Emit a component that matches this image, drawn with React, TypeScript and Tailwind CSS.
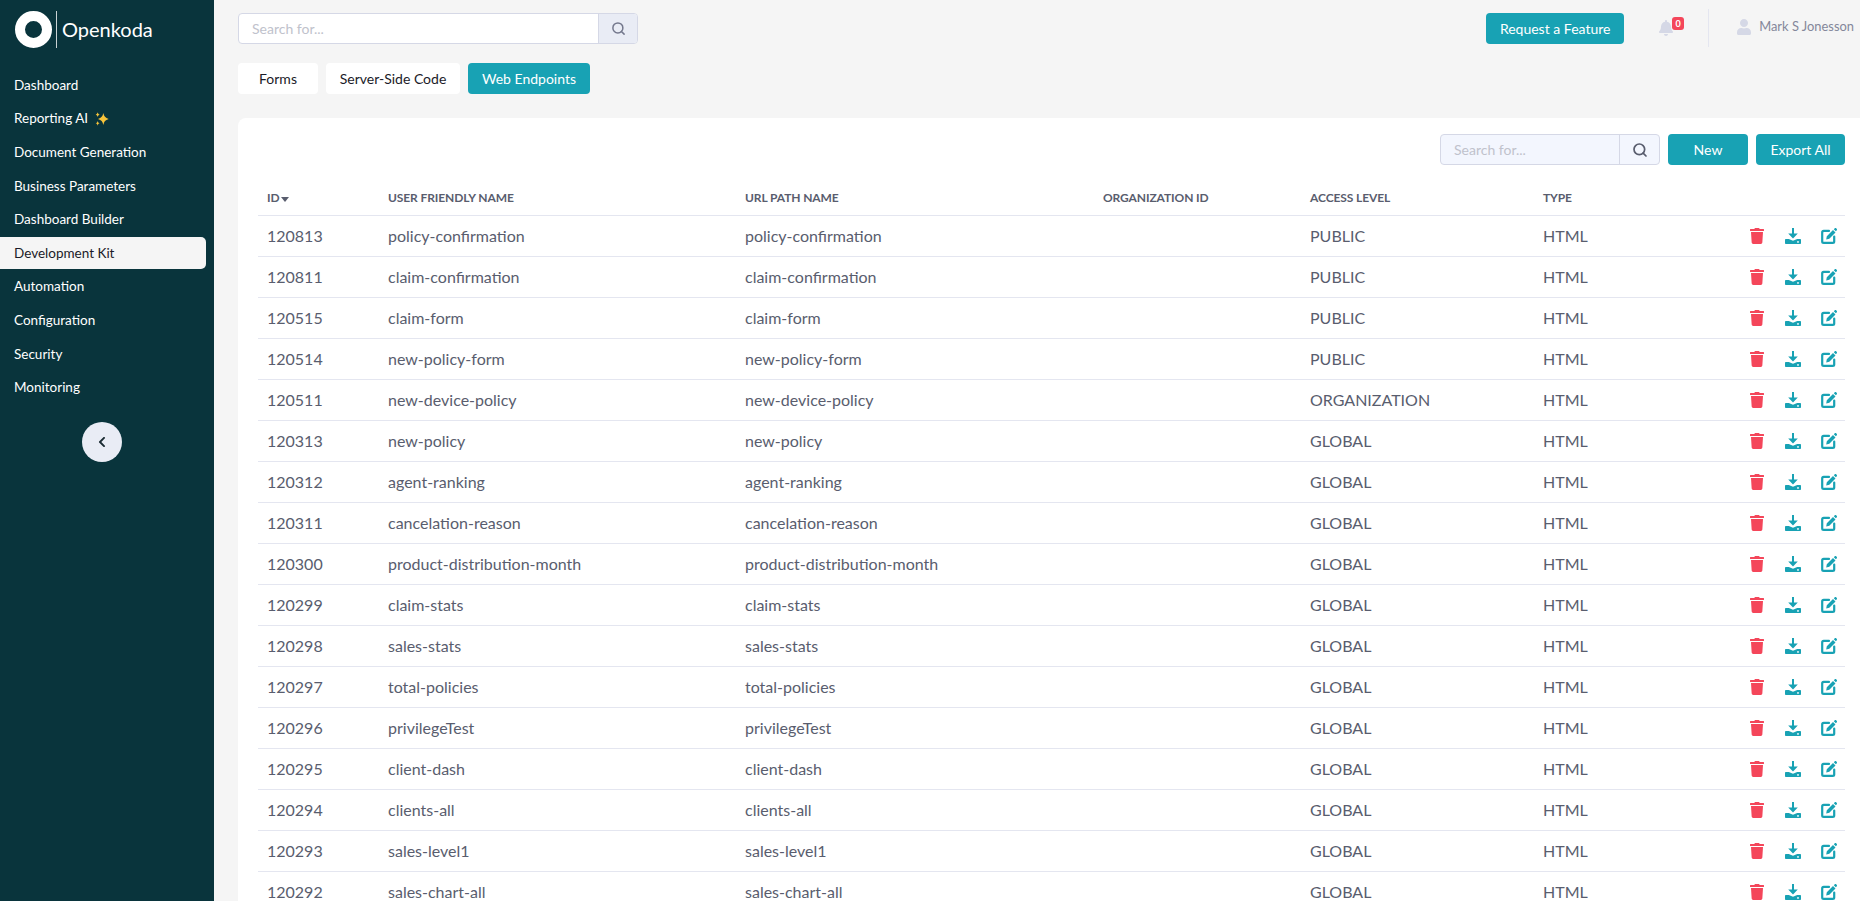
import React from "react";
import { FaTrash, FaBell, FaUser, FaChevronLeft } from "react-icons/fa";
import { Search } from "lucide-react";

const nav = ["Dashboard", "Reporting AI", "Document Generation", "Business Parameters", "Dashboard Builder", "Development Kit", "Automation", "Configuration", "Security", "Monitoring"];

const rows: [string, string, string, string][] = [
  ["120813", "policy-confirmation", "policy-confirmation", "PUBLIC"],
  ["120811", "claim-confirmation", "claim-confirmation", "PUBLIC"],
  ["120515", "claim-form", "claim-form", "PUBLIC"],
  ["120514", "new-policy-form", "new-policy-form", "PUBLIC"],
  ["120511", "new-device-policy", "new-device-policy", "ORGANIZATION"],
  ["120313", "new-policy", "new-policy", "GLOBAL"],
  ["120312", "agent-ranking", "agent-ranking", "GLOBAL"],
  ["120311", "cancelation-reason", "cancelation-reason", "GLOBAL"],
  ["120300", "product-distribution-month", "product-distribution-month", "GLOBAL"],
  ["120299", "claim-stats", "claim-stats", "GLOBAL"],
  ["120298", "sales-stats", "sales-stats", "GLOBAL"],
  ["120297", "total-policies", "total-policies", "GLOBAL"],
  ["120296", "privilegeTest", "privilegeTest", "GLOBAL"],
  ["120295", "client-dash", "client-dash", "GLOBAL"],
  ["120294", "clients-all", "clients-all", "GLOBAL"],
  ["120293", "sales-level1", "sales-level1", "GLOBAL"],
  ["120292", "sales-chart-all", "sales-chart-all", "GLOBAL"],
];

function Sparkles() {
  return (
    <svg viewBox="0 0 24 24" className="w-[16px] h-[16px] ml-[6px]" aria-label="sparkles">
      <path fill="#f7c43b" d="M14 3c1 5 3 7.500 8 9-5 1.500-7 4-8 9-1-5-3-7.500-8-9 5-1.500 7-4 8-9z" />
      <path fill="#f7c43b" d="M5.500 2c.4 2 1.200 2.900 3 3.500-1.800.6-2.600 1.500-3 3.500-.4-2-1.200-2.900-3-3.500 1.800-.6 2.600-1.500 3-3.500zM5.500 15c.4 2 1.200 2.900 3 3.500-1.800.6-2.600 1.500-3 3.500-.4-2-1.200-2.900-3-3.500 1.800-.6 2.600-1.500 3-3.500z" />
    </svg>
  );
}

function DownloadIcon() {
  return (
    <svg viewBox="0 0 16 16" className="w-[16px] h-[16px] text-[#18a2b4]" aria-hidden="true">
      <path fill="currentColor" d="M7 0h2v5.500h3.800L8 10.500 3.200 5.500H7z" />
      <path fill="currentColor" fillRule="evenodd" d="M0 12c0-.6.500-1 1-1h2.800L8 12.800 12.200 11H15c.6 0 1 .4 1 1v3c0 .6-.4 1-1 1H1c-.5 0-1-.4-1-1zM13 13a.9.9 0 1 0 0 1.800.9.9 0 0 0 0-1.800z" />
    </svg>
  );
}

function EditIcon() {
  return (
    <svg viewBox="0 0 16 16" className="w-[16px] h-[16px] text-[#18a2b4]" aria-hidden="true">
      <path fill="none" stroke="currentColor" strokeWidth="2.200" strokeLinecap="round" d="M8 2.900H2.700c-.8 0-1.500.7-1.500 1.500v9.100c0 .8.700 1.400 1.500 1.400h9.100c.8 0 1.400-.6 1.400-1.400V8.500" />
      <path fill="currentColor" d="M12 2.100 14.500 4.600 8.300 10.800 5.200 11.400 5.800 8.300zM12.800 1.300 13.800.3c.4-.4 1-.4 1.400 0l.6.6c.4.4.4 1 0 1.400l-1 1z" />
    </svg>
  );
}

function Sidebar() {
  return (
    <aside className="w-[214px] shrink-0 bg-[#09343c] flex flex-col">
      <div className="h-[69px] flex items-start pt-[11px] pl-[15px]">
        <div className="w-[37px] h-[37px] rounded-full border-[10px] border-white" />
        <div className="w-px h-[37px] bg-[#c9d2d4] ml-[4px]" />
        <span className="ml-[5px] text-white text-[20px] leading-[37px]">Openkoda</span>
      </div>
      <nav className="flex flex-col gap-[1.6px] pr-2">
        {nav.map((n) => (
          <div
            key={n}
            className={
              "h-[32px] pl-[14px] flex items-center text-[13.5px] rounded-r-[5px] " +
              (n === "Development Kit" ? "bg-[#f5f5f5] text-[#1b1b28]" : "text-white")
            }
          >
            {n}
            {n === "Reporting AI" && <Sparkles />}
          </div>
        ))}
      </nav>
      <div className="mt-[19px] ml-[82px] w-[40px] h-[40px] rounded-full bg-[#e9ecf5] flex items-center justify-center text-[#1b2b33]">
        <FaChevronLeft size={12} />
      </div>
    </aside>
  );
}

function Topbar() {
  return (
    <div className="h-[63px] flex items-start pt-[13px] pl-[24px]">
      <div className="w-[400px] h-[31px] flex rounded-[4px] border border-[#d5d8e6] bg-white overflow-hidden">
        <div className="flex-1 pl-[13px] text-[14px] leading-[29px] text-[#c0c2cc]">Search for...</div>
        <div className="w-[39px] bg-[#e9ecf5] border-l border-[#d5d8e6] flex items-center justify-center text-[#74788d]">
          <Search size={15} strokeWidth={2.4} />
        </div>
      </div>
      <div className="ml-auto flex items-start">
        <div className="w-[138px] h-[31px] rounded-[4px] bg-[#18a2b4] text-white text-[14px] flex items-center justify-center">Request a Feature</div>
        <div className="relative ml-[34px] mt-[7px] text-[#d5d8e6]">
          <FaBell size={16} />
          <span className="absolute -top-[3px] left-[14px] w-[12px] h-[13px] rounded-[3px] bg-[#f4465a] text-white text-[9px] font-bold leading-[13px] text-center">0</span>
        </div>
        <div className="w-px h-[38px] bg-[#e4e6f0] ml-[34px] -mt-[4px]" />
        <div className="ml-[27px] mr-[6px] flex items-center gap-[7px] h-[28px] text-[12.9px] text-[#84879a]">
          <FaUser size={16} className="text-[#d5d8e6]" />
          <span>Mark S Jonesson</span>
        </div>
      </div>
    </div>
  );
}

function Tabs() {
  const cls = "h-[31px] rounded-[4px] text-[14px] flex items-center justify-center";
  return (
    <div className="flex gap-[8px] pl-[24px]">
      <div className={cls + " w-[80px] bg-white text-[#1b1b28]"}>Forms</div>
      <div className={cls + " w-[134px] bg-white text-[#1b1b28]"}>Server-Side Code</div>
      <div className={cls + " w-[122px] bg-[#18a2b4] text-white"}>Web Endpoints</div>
    </div>
  );
}

function Card() {
  const th = "text-left font-bold text-[12px] tracking-[-0.1px] text-[#595d6e] pl-[9px] pt-[2px] h-[35px] border-b border-[#e4e6f0] uppercase";
  const td = "pl-[9px] pt-[1px] text-[16px] text-[#595d6e] h-[41px] border-b border-[#e4e6f0]";
  return (
    <div className="mt-[24px] ml-[24px] bg-white rounded-tl-[8px] pl-[20px] pr-[15px] pt-[16px]">
      <div className="flex justify-end gap-[8px]">
        <div className="w-[220px] h-[31px] flex rounded-[4px] border border-[#d5d8e6] bg-[#f3f6fe] overflow-hidden">
          <div className="flex-1 pl-[13px] text-[14px] leading-[29px] text-[#c0c2cc]">Search for...</div>
          <div className="w-[40px] border-l border-[#d5d8e6] flex items-center justify-center text-[#595d6e]">
            <Search size={16} strokeWidth={2.6} />
          </div>
        </div>
        <div className="w-[80px] h-[31px] rounded-[4px] bg-[#18a2b4] text-white text-[14px] flex items-center justify-center">New</div>
        <div className="w-[89px] h-[31px] rounded-[4px] bg-[#18a2b4] text-white text-[14px] flex items-center justify-center">Export All</div>
      </div>
      <table className="table-fixed w-full mt-[15px] border-collapse">
        <colgroup>
          <col className="w-[121px]" />
          <col className="w-[357px]" />
          <col className="w-[358px]" />
          <col className="w-[207px]" />
          <col className="w-[233px]" />
          <col />
          <col className="w-[110px]" />
        </colgroup>
        <thead>
          <tr>
            <th className={th}>
              <span className="inline-flex items-center">
                ID
                <svg viewBox="0 0 10 6" className="w-[8px] h-[5px] ml-[2px] mt-[3px]"><path fill="#595d6e" d="M0 0h10L5 6z" /></svg>
              </span>
            </th>
            <th className={th}>User friendly name</th>
            <th className={th}>URL path name</th>
            <th className={th}>Organization ID</th>
            <th className={th}>Access level</th>
            <th className={th}>Type</th>
            <th className={th} />
          </tr>
        </thead>
        <tbody>
          {rows.map((r) => (
            <tr key={r[0]}>
              <td className={td}>{r[0]}</td>
              <td className={td}>{r[1]}</td>
              <td className={td}>{r[2]}</td>
              <td className={td} />
              <td className={td}>{r[3]}</td>
              <td className={td}>HTML</td>
              <td className={td}>
                <div className="flex items-center justify-end pr-[8px] gap-[20px]">
                  <FaTrash size={16} className="text-[#f4465a]" />
                  <DownloadIcon />
                  <EditIcon />
                </div>
              </td>
            </tr>
          ))}
        </tbody>
      </table>
    </div>
  );
}

export default function App() {
  return (
    <div className="flex h-[901px] overflow-hidden bg-[#f5f5f5] font-['Lato','Liberation_Sans',sans-serif]">
      <Sidebar />
      <main className="flex-1 min-w-0 overflow-hidden">
        <Topbar />
        <Tabs />
        <Card />
      </main>
    </div>
  );
}
